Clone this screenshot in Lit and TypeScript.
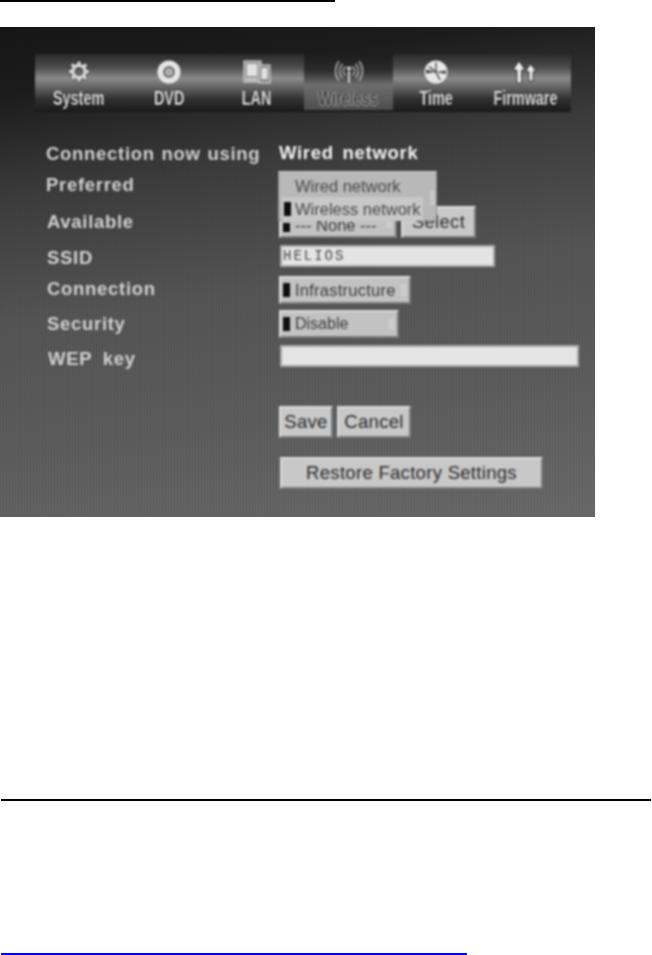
import { LitElement, html, css, svg } from "lit";
import { customElement } from "lit/decorators.js";

const icons: Record<string, unknown> = {
  gear: svg`<g fill="#d8d8d8" stroke="#111" stroke-width=".6"><path fill-rule="evenodd" d="M10.400 1h3.200l.6 2.900 1.700.7 2.500-1.600 2.200 2.200-1.600 2.500.7 1.700 2.900.6v3.200l-2.900.6-.7 1.700 1.600 2.500-2.200 2.200-2.500-1.600-1.700.7-.6 2.900h-3.200l-.6-2.900-1.700-.7-2.500 1.600-2.200-2.200 1.600-2.500-.7-1.700-2.900-.6V9.800l2.900-.6.7-1.700L3.400 5l2.200-2.200 2.500 1.600 1.700-.7zM12 7.500a4 4 0 1 0 0 8a4 4 0 0 0 0-8z"/></g>`,
  disc: svg`<circle cx="12" cy="12" r="11.500" fill="#e6e6e6"/><circle cx="12" cy="12" r="6" fill="#777"/><circle cx="12" cy="12" r="3" fill="#e6e6e6"/><circle cx="12" cy="12" r="1.400" fill="#666"/>`,
  lan: svg`<rect x="1" y="1" width="17" height="21" fill="#9a9a9a" stroke="#ddd"/><rect x="4" y="4" width="10" height="12" fill="#e2e2e2"/><rect x="16" y="5" width="11" height="18" fill="#8e8e8e" stroke="#ddd"/><rect x="18.500" y="8" width="6" height="11" fill="#e2e2e2"/><rect x="3" y="18" width="11" height="2.500" fill="#ccc"/>`,
  wifi: svg`<g fill="none" stroke="#a9a9a9" stroke-width="1.800" stroke-linecap="round"><path d="M11 7a6 6 0 0 0 0 8M8 4.500a10 10 0 0 0 0 13M4.500 2a15 15 0 0 0 0 18"/><path d="M19 7a6 6 0 0 1 0 8M22 4.500a10 10 0 0 1 0 13M25.500 2a15 15 0 0 1 0 18"/></g><circle cx="15" cy="8.500" r="2.500" fill="#ccc" stroke="#222" stroke-width=".6"/><rect x="13.500" y="10.500" width="3" height="13" fill="#ccc" stroke="#222" stroke-width=".5"/>`,
  clock: svg`<circle cx="12" cy="12" r="11.500" fill="#e8e8e8"/><path d="M12 2.500V12L5 6.500" fill="none" stroke="#333" stroke-width="1.200"/><path d="M12 12L2 9.500v4z" fill="#444"/><path d="M12 12L22 10.500v3.500z" fill="#444"/><path d="M12 12l4 8" fill="none" stroke="#333" stroke-width="1.200"/>`,
  arrows: svg`<g fill="#ececec" stroke="#111" stroke-width=".7"><path d="M7 1 13 10H9.500V23H5V10H1z"/><path d="M18.500 4 24 11.500H21V21H17V11.500H13.500z"/></g>`,
};

const tabs = [
  { label: "System", icon: "gear", w: 88, iw: 24 },
  { label: "DVD", icon: "disc", w: 92, iw: 24 },
  { label: "LAN", icon: "lan", w: 84, iw: 28 },
  { label: "Wireless", icon: "wifi", w: 89, iw: 30, on: true },
  { label: "Time", icon: "clock", w: 86, iw: 24 },
  { label: "Firmware", icon: "arrows", w: 92, iw: 26 },
];

@customElement("app-root")
export class AppRoot extends LitElement {
  static styles = css`
    :host { display: block; width: 652px; height: 955px; background: #fff; overflow: hidden; }
    .page { height: 955px; display: flex; flex-direction: column; }
    .rule-top { width: 335px; height: 2px; background: #000; flex: none; }
    .screen {
      flex: none; margin-top: 25px; width: 595px; height: 490px; box-sizing: border-box;
      padding: 27px 0 0 35px; position: relative; overflow: hidden;
      background:
        repeating-linear-gradient(90deg, rgba(0,0,0,.03) 0 1px, transparent 1px 3px),
        linear-gradient(172deg, #161616 0%, #1c1c1c 12%, #3c3c3c 30%, #545454 52%, #5c5c5c 75%, #686868 100%);
    }
    .soft { filter: blur(.8px); }
    .nav {
      width: 536px; height: 58px; display: flex;
      background: linear-gradient(180deg, #2a2a2a 0%, #4a4a4a 22%, #8a8a8a 42%, #6a6a6a 55%, #303030 78%, #1a1a1a 100%);
    }
    .tab { flex: none; display: flex; flex-direction: column; align-items: center; font: 700 20px "Liberation Sans", sans-serif; color: #dcdcdc; padding-top: 6px; box-sizing: border-box; }
    .gap { margin-right: 5px; }
    .tab.on { background: linear-gradient(180deg, #1d1d1d 0%, #2c2c2c 30%, #6e6e6e 55%, #4d4d4d 100%); color: #3a3a3a; height: 56px; }
    .tab.on .t { text-shadow: 0 0 1px #bbb, 1px 0 1px #aaa, -1px 0 1px #aaa, 0 1px 1px #aaa; }
    .tab svg { height: 24px; display: block; }
    .t { display: block; margin-top: 4px; line-height: 21px; transform: scaleX(.72); white-space: nowrap; text-shadow: 0 1px 1px #000; }
    .form { display: flex; margin-left: 11px; margin-top: 29px; }
    .labels { width: 233px; flex: none; font: 700 18.500px "Liberation Sans", sans-serif; letter-spacing: .7px; word-spacing: 1px; color: #d2d2d2; }
    .labels div { white-space: nowrap; line-height: 22px; }
    .wep { word-spacing: 5px; }
    .fields { position: relative; flex: none; width: 310px; font: 400 16.500px "Liberation Sans", sans-serif; color: #383838; }
    .now { font: 700 18.500px "Liberation Sans", sans-serif; letter-spacing: .7px; word-spacing: 3px; color: #f4f4f4; line-height: 22px; }
    .row { display: flex; gap: 4px; }
    .ctl {
      box-sizing: border-box; background: #c2c2c2; border: 2px solid; border-color: #dcdcdc #7c7c7c #7c7c7c #dcdcdc;
      display: flex; align-items: center; position: relative; white-space: nowrap;
    }
    .btn { justify-content: center; height: 32px; font-size: 18.500px; color: #2b2b2b; letter-spacing: .3px; background: #c8c8c8; }
    .select { padding-left: 2px; height: 28px; }
    .mark { width: 7px; height: 14px; background: #0e0e0e; margin-right: 5px; flex: none; }
    .grip { position: absolute; right: 3px; top: 50%; width: 5px; height: 11px; margin-top: -5px; background: repeating-linear-gradient(180deg, #e4e4e4 0 1px, transparent 1px 3px); }
    .input { box-sizing: border-box; height: 22px; background: #e4e4e4; border: 2px solid #a8a8a8; }
    .ssid { font: 400 14px "Liberation Mono", monospace; letter-spacing: 2px; color: #444; padding-left: 1px; line-height: 18px; white-space: nowrap; }
    .none { height: 32px; }
    .none-mark { height: 9px; margin-top: 11px; }
    .none-text { margin-top: 6px; }
    .infra { letter-spacing: .25px; }
    .disable { font-size: 16px; }
    .popup {
      position: absolute; left: -1px; top: 30px; width: 159px; height: 50px; box-sizing: border-box;
      background: #b8b8b8; border: 1px solid #8d8d8d; border-top-color: #ccc; color: #484848;
    }
    .popup .a { position: absolute; left: 16px; top: 4px; line-height: 20px; }
    .popup .b { position: absolute; left: 3px; top: 25px; width: 141px; height: 24px; background: #c8c8c8; display: flex; align-items: center; padding-left: 2px; box-sizing: border-box; white-space: nowrap; }
    .popup .b .mark { margin-right: 4px; }
    .popup .grip { top: 19px; margin: 0; right: 1px; height: 13px; }
  `;

  render() {
    return html`<div class="page">
      <div class="rule-top"></div>
      <div class="screen"><div class="soft">
        <div class="nav">
          ${tabs.map(
            (t) => html`<div class="tab ${t.on ? "on" : ""} ${t.label === "LAN" ? "gap" : ""}" style="width:${t.w}px">
              <svg viewBox="0 0 ${t.iw} 24" style="width:${t.iw}px">${icons[t.icon]}</svg><span class="t">${t.label}</span>
            </div>`
          )}
        </div>
        <div class="form">
          <div class="labels">
            <div style="margin-top:2px">Connection now using</div>
            <div style="margin-top:9px">Preferred</div>
            <div style="margin-top:15px;margin-left:1px">Available</div>
            <div style="margin-top:14px;margin-left:1px">SSID</div>
            <div style="margin-top:9px;margin-left:1px">Connection</div>
            <div style="margin-top:13px;margin-left:1px">Security</div>
            <div class="wep" style="margin-top:13px;margin-left:2px">WEP key</div>
          </div>
          <div class="fields">
            <div class="now" style="margin-top:1px">Wired network</div>
            <div class="row" style="margin-top:42px">
              <div class="ctl select none" style="width:118px">
                <i class="mark none-mark"></i><span class="none-text">--- None ---</span><i class="grip"></i>
              </div>
              <div class="ctl btn" style="width:75px">Select</div>
            </div>
            <div class="input ssid" style="margin:7px 0 0 1px;width:215px">HELIOS</div>
            <div class="ctl select infra" style="width:132px;margin-top:9px"><i class="mark"></i>Infrastructure<i class="grip"></i></div>
            <div class="ctl select disable" style="width:120px;margin-top:6px"><i class="mark"></i>Disable<i class="grip"></i></div>
            <div class="input" style="margin:7px 0 0 1px;width:299px"></div>
            <div class="row" style="margin-top:39px">
              <div class="ctl btn" style="width:54px">Save</div>
              <div class="ctl btn" style="width:74px">Cancel</div>
            </div>
            <div class="ctl btn" style="margin:19px 0 0 1px;width:263px">Restore Factory Settings</div>
            <div class="popup">
              <span class="a">Wired network</span>
              <div class="b"><i class="mark"></i>Wireless network</div>
              <i class="grip"></i>
            </div>
          </div>
        </div>
      </div></div>
      <div style="flex:none;height:282px"></div>
      <div style="flex:none;height:2px;margin:0 1px;background:#000"></div>
      <div style="flex:none;height:152px"></div>
      <div style="flex:none;height:2px;width:466px;margin-left:1px;background:#00f"></div>
    </div>`;
  }
}
